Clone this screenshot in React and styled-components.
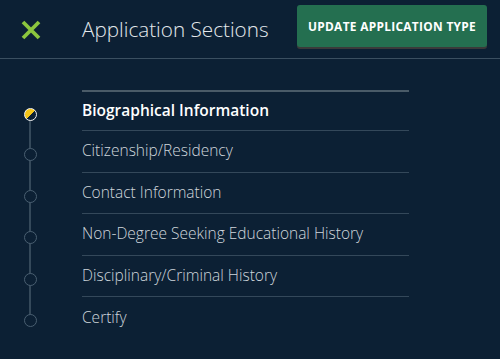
import React from "react";
import styled, { createGlobalStyle } from "styled-components";

const Global = createGlobalStyle`
  html, body { margin: 0; padding: 0; background: #0c2034; }
  body { font-family: "Open Sans", "Liberation Sans", sans-serif; }
  #root { min-height: 359px; }
`;

const Page = styled.div`
  width: 500px;
  height: 359px;
  background: #0c2034;
  overflow: hidden;
`;

const Header = styled.header`
  display: flex;
  align-items: center;
  height: 59px;
  box-sizing: border-box;
  border-bottom: 1px solid #3b4f60;
  padding: 0 13px 0 21px;
`;

const CloseButton = styled.button`
  display: flex;
  align-items: center;
  justify-content: center;
  width: 20px;
  height: 20px;
  padding: 0;
  border: 0;
  background: none;
  margin-right: 41px;
  margin-top: 1px;
  cursor: pointer;
`;

const Title = styled.h1`
  flex: 1;
  margin: 0;
  font-size: 20.7px;
  font-weight: 300;
  color: #e3e8ec;
  letter-spacing: 0;
  margin-top: -1px;
`;

const UpdateButton = styled.button`
  height: 42px;
  margin-top: -6px;
  width: 190px;
  border: 0;
  border-radius: 3px;
  background: #246f50;
  box-shadow: 0 2px 0 #3a3a3a;
  color: #ffffff;
  font-family: "Open Sans", "Liberation Sans", sans-serif;
  font-weight: 700;
  font-size: 11.9px;
  letter-spacing: 0.3px;
  text-transform: uppercase;
`;

const Body = styled.div`
  padding-top: 31px;
`;

const Steps = styled.ol`
  position: relative;
  list-style: none;
  margin: 0;
  padding: 0;
  &::before {
    content: "";
    position: absolute;
    left: 29px;
    top: 24px;
    bottom: 18px;
    width: 2px;
    background: #35495a;
  }
`;

const Step = styled.li`
  display: flex;
  align-items: stretch;
`;

const DotCell = styled.div`
  width: 82px;
  display: flex;
  align-items: center;
  justify-content: center;
  padding-right: 22px;
  box-sizing: border-box;
  padding-top: ${p => (p.$first ? "8px" : "6px")};
  position: relative;
  z-index: 1;
`;

const Dot = styled.span`
  width: 13px;
  height: 13px;
  box-sizing: border-box;
  border-radius: 50%;
  border: ${p => (p.$active ? "1.5px solid #f2f2f2" : "1.5px solid #4a5f71")};
  background: ${p =>
    p.$active
      ? "linear-gradient(135deg, #f5c518 0%, #f5c518 50%, #0c2034 50%, #0c2034 100%)"
      : "#0c2034"};
`;

const Label = styled.div`
  width: 327px;
  height: ${p => (p.$first ? "41px" : "41.5px")};
  box-sizing: border-box;
  display: flex;
  align-items: center;
  border-top: ${p => (p.$first ? "2px solid #4a5b68" : "0")};
  border-bottom: ${p => (p.$last ? "0" : "1px solid #34485a")};
  font-size: 15.5px;
  font-weight: ${p => (p.$active ? 600 : 300)};
  color: ${p => (p.$active ? "#ffffff" : "#cfd6dc")};
  padding-bottom: 2px;
`;

const steps = [
  "Biographical Information",
  "Citizenship/Residency",
  "Contact Information",
  "Non-Degree Seeking Educational History",
  "Disciplinary/Criminal History",
  "Certify",
];

export default function App() {
  return (
    <Page>
      <Global />
      <Header>
        <CloseButton aria-label="Close">
          <svg width="20" height="20" viewBox="0 0 20 20">
            <path d="M2 2 L18 18 M18 2 L2 18" stroke="#8cc63e" strokeWidth="3.8" strokeLinecap="butt" />
          </svg>
        </CloseButton>
        <Title>Application Sections</Title>
        <UpdateButton>Update Application Type</UpdateButton>
      </Header>
      <Body>
        <Steps>
          {steps.map((s, i) => (
            <Step key={s}>
              <DotCell $first={i === 0}>
                <Dot $active={i === 0} />
              </DotCell>
              <Label $first={i === 0} $last={i === steps.length - 1} $active={i === 0}>
                {s}
              </Label>
            </Step>
          ))}
        </Steps>
      </Body>
    </Page>
  );
}
